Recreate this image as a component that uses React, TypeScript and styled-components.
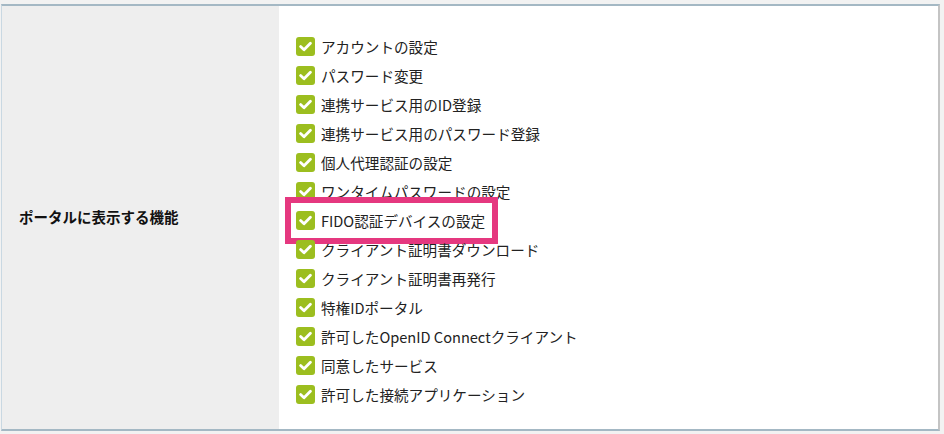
import React from 'react';
import styled, { createGlobalStyle } from 'styled-components';

const GlobalStyle = createGlobalStyle`
  html, body {
    margin: 0;
    padding: 0;
    background: #ffffff;
  }
  body {
    font-family: "Noto Sans CJK JP", "Noto Sans", sans-serif;
    color: #222222;
  }
`;

const Frame = styled.div`
  display: flex;
  width: 944px;
  height: 434px;
  box-sizing: border-box;
  padding-top: 4px;
  background: #f2f2f2;
`;

const Table = styled.div`
  display: grid;
  grid-template-columns: 277px 1fr;
  width: 939px;
  height: 427px;
  box-sizing: border-box;
  margin-left: 1px;
  border-top: 2px solid #a4b8c4;
  border-bottom: 2px solid #a4b8c4;
  border-left: 1px solid #c9d8e2;
  border-right: 2px solid #c4c4c4;
  background: #ffffff;
`;

const HeadCell = styled.div`
  display: flex;
  align-items: center;
  padding-left: 17px;
  background: #eeeeee;
  font-size: 14.5px;
  font-weight: 700;
  color: #111111;
  padding-bottom: 2px;
`;

const ValueCell = styled.div`
  display: flex;
  flex-direction: column;
  align-items: flex-start;
  padding: 26px 0 0 17px;
`;

const Item = styled.div<{ $marked?: boolean }>`
  position: relative;
  display: inline-flex;
  align-items: center;
  gap: 6px;
  height: 29px;
  font-size: 14.6px;
  white-space: nowrap;

  ${(p) =>
    p.$marked &&
    `
    &::after {
      content: '';
      position: absolute;
      left: -11px;
      right: -13px;
      top: -9px;
      bottom: -9px;
      border: 6px solid #e5387f;
    }
  `}
`;

const Box = styled.span`
  display: inline-flex;
  align-items: center;
  justify-content: center;
  width: 19px;
  height: 19px;
  border-radius: 3px;
  background: #9cbe1f;
  flex-shrink: 0;
`;

const Check = () => (
  <Box>
    <svg width="13" height="11" viewBox="0 0 13 11">
      <path d="M1.6 5.6 L5 8.8 L11.4 2.2" fill="none" stroke="#fff" strokeWidth="2.8" strokeLinecap="round" strokeLinejoin="round" />
    </svg>
  </Box>
);

const items = [
  'アカウントの設定',
  'パスワード変更',
  '連携サービス用のID登録',
  '連携サービス用のパスワード登録',
  '個人代理認証の設定',
  'ワンタイムパスワードの設定',
  'FIDO認証デバイスの設定',
  'クライアント証明書ダウンロード',
  'クライアント証明書再発行',
  '特権IDポータル',
  '許可したOpenID Connectクライアント',
  '同意したサービス',
  '許可した接続アプリケーション',
];

export default function App() {
  return (
    <>
      <GlobalStyle />
      <Frame>
        <Table>
          <HeadCell>ポータルに表示する機能</HeadCell>
          <ValueCell>
            {items.map((label) => (
              <Item key={label} $marked={label.startsWith('FIDO')}>
                <Check />
                {label}
              </Item>
            ))}
          </ValueCell>
        </Table>
      </Frame>
    </>
  );
}
